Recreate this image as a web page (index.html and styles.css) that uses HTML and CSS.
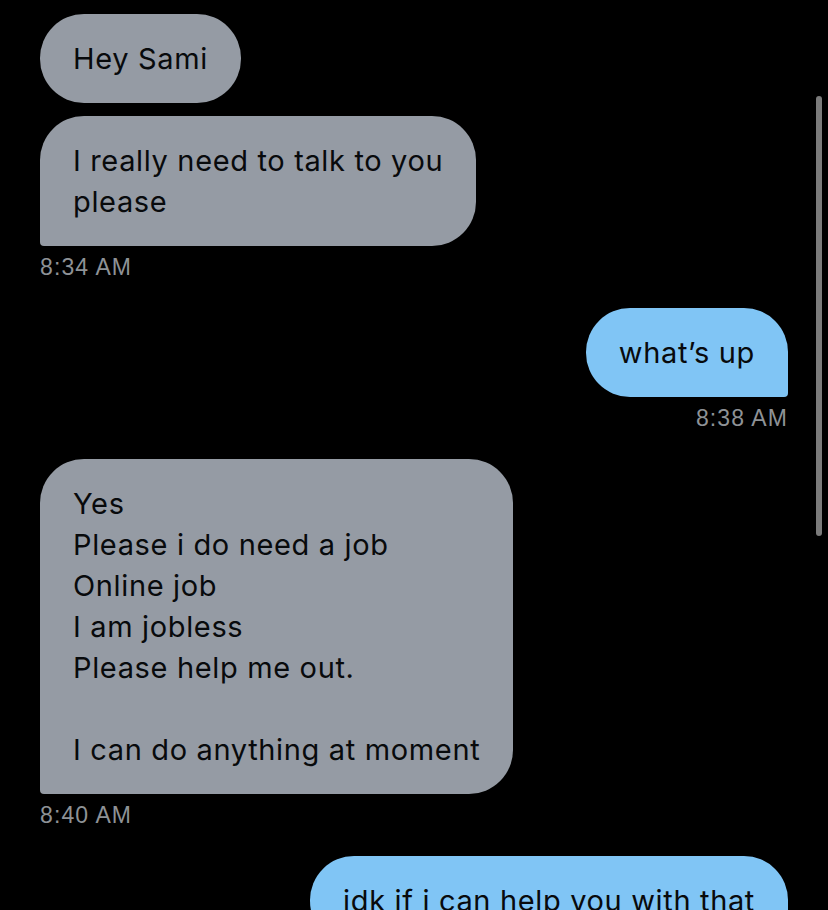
FILE: index.html
```html
<!DOCTYPE html>
<html lang="en">
<head>
  <meta charset="UTF-8">
  <title>Messages</title>
  <meta name="viewport" content="width=device-width, initial-scale=1.0">
  <link rel="stylesheet" href="styles.css">
</head>
<body>
  <div class="chat">
    <div class="msg in">
      <div class="bubble round">Hey Sami</div>
    </div>
    <div class="msg in">
      <div class="bubble">I really need to talk to you<br>please</div>
      <div class="time">8:34 AM</div>
    </div>

    <div class="msg out">
      <div class="bubble">what’s up</div>
      <div class="time">8:38 AM</div>
    </div>

    <div class="msg in">
      <div class="bubble">Yes<br>Please i do need a job<br>Online job<br>I am jobless<br>Please help me out.<br><br>I can do anything at moment</div>
      <div class="time">8:40 AM</div>
    </div>

    <div class="msg out">
      <div class="bubble">idk if i can help you with that</div>
    </div>
  </div>

  <div class="scrollbar"></div>
</body>
</html>
```

FILE: styles.css
```css
body {
  margin: 0;
  background: #000;
  height: 910px;
  overflow: hidden;
  font-family: Inter, 'Noto Sans', sans-serif;
}
.chat {
  padding: 14px 40px 0 40px;
  display: flex;
  flex-direction: column;
}
.msg {
  display: flex;
  flex-direction: column;
  margin-bottom: 13px;
}
.msg.in {
  align-items: flex-start;
}
.msg.out {
  align-items: flex-end;
}
.msg:has(.time) {
  margin-bottom: 28px;
}
.bubble {
  padding: 24px 33px;
  font-size: 29px;
  line-height: 41px;
  color: #080a0c;
  letter-spacing: 0.65px;
  white-space: nowrap;
  border-radius: 44px;
}
.in .bubble {
  background: #959ba4;
  border-bottom-left-radius: 4px;
}
.in .bubble.round {
  border-bottom-left-radius: 44px;
}
.out .bubble {
  background: #80c5f5;
  border-bottom-right-radius: 4px;
}
.time {
  margin-top: 8px;
  font-family: 'Liberation Sans', Arial, sans-serif;
  font-size: 23px;
  line-height: 26px;
  letter-spacing: 1.1px;
  color: #8e9296;
}
.scrollbar {
  position: absolute;
  top: 96px;
  left: 816px;
  width: 6px;
  height: 440px;
  border-radius: 3px;
  background: #7b7b7b;
}
```
